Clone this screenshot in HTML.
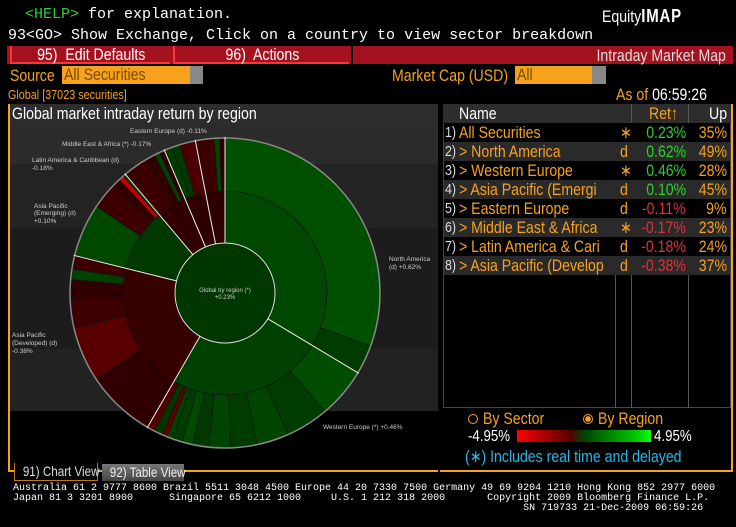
<!DOCTYPE html>
<html><head><meta charset="utf-8"><style>
*{margin:0;padding:0;box-sizing:border-box}
body{width:736px;height:527px;background:#000;position:relative;overflow:hidden;font-family:"Liberation Sans",sans-serif;color:#fff}
.a{position:absolute;white-space:nowrap}
.n{display:inline-block;transform:scaleX(.83);transform-origin:0 0}
.nr{display:inline-block;transform:scaleX(.83);transform-origin:100% 0}
.nc{display:inline-block;transform:scaleX(.83);transform-origin:50% 0}
.mono{font-family:"Liberation Mono",monospace}
.or{color:#f6a21d}
.row{position:absolute;left:444px;width:286px;height:19px;font-size:17px;line-height:19px}
.row span{position:absolute;top:0}
</style></head><body>
<div class="a mono" style="left:25px;top:6px;font-size:15px"><span style="color:#2bd12b">&lt;HELP&gt;</span> for explanation.</div>
<div class="a" style="left:602px;top:6px;font-size:17px"><span class="n">Equity<b style="font-size:18px;letter-spacing:1px">IMAP</b></span></div>
<div class="a mono" style="left:8px;top:27px;font-size:15px">93&lt;GO&gt; Show Exchange, Click on a country to view sector breakdown</div>
<div class="a" style="left:7px;top:46px;width:726px;height:18px;background:#a4121f"></div>
<div class="a" style="left:10px;top:46px;width:160px;height:18px;background:#a4121f;border-bottom:2px solid #f33;border-left:2px solid #f33;font-size:17px;line-height:17px;text-align:center"><span class="nc">95)&nbsp; Edit Defaults</span></div>
<div class="a" style="left:173px;top:46px;width:176px;height:18px;background:#a4121f;border-bottom:2px solid #f33;border-left:2px solid #f33;font-size:17px;line-height:17px;text-align:center"><span class="nc">96)&nbsp; Actions</span></div>
<div class="a" style="left:351px;top:46px;width:2px;height:18px;background:#000"></div>
<div class="a" style="right:10px;top:47px;font-size:17px;line-height:17px;color:#ddd"><span class="nr">Intraday Market Map</span></div>
<div class="a or" style="left:10px;top:66px;font-size:17px"><span class="n">Source</span></div>
<div class="a" style="left:62px;top:66px;width:128px;height:18px;background:#f6a21d;color:#7a4a00;font-size:17px;line-height:18px;padding-left:2px"><span class="n">All Securities</span></div>
<div class="a" style="left:190px;top:66px;width:13px;height:18px;background:#888"></div>
<div class="a or" style="left:392px;top:66px;font-size:17px"><span class="n">Market Cap (USD)</span></div>
<div class="a" style="left:515px;top:66px;width:77px;height:18px;background:#f6a21d;color:#7a4a00;font-size:17px;line-height:18px;padding-left:2px"><span class="n">All</span></div>
<div class="a" style="left:592px;top:66px;width:14px;height:18px;background:#888"></div>
<div class="a or" style="left:8px;top:87px;font-size:13px"><span class="n">Global [37023 securities]</span></div>
<div class="a" style="left:616px;top:85px;font-size:17px"><span class="n"><span class="or">As of</span> 06:59:26</span></div>

<div class="a" style="left:8px;top:104px;width:2px;height:368px;background:#f6a21d"></div>
<div class="a" style="left:8px;top:470px;width:430px;height:2px;background:#f6a21d"></div>
<div class="a" style="left:731px;top:104px;width:2px;height:368px;background:#f6a21d"></div>
<div class="a" style="left:440px;top:470px;width:293px;height:2px;background:#f6a21d"></div>
<div class="a" style="left:10px;top:104px;width:428px;height:20px;background:#2d2d2d;font-size:17px;line-height:20px;padding-left:2px"><span class="n">Global market intraday return by region</span></div>
<svg class="a" style="left:10px;top:124px" width="428" height="346" id="ch"></svg>

<div class="a" style="left:443px;top:104px;width:288px;height:304px;border:1px solid #444;border-top:none"></div>
<div class="a" style="left:443px;top:104px;width:288px;height:19px;background:#2d2d2d;font-size:17px;line-height:19px">
<span class="a n" style="left:16px">Name</span><span class="a or n" style="left:206px">Ret↑</span><span class="a n" style="left:266px">Up</span></div>
<div class="a" style="left:631px;top:104px;width:1px;height:304px;background:#555"></div>
<div class="a" style="left:688px;top:104px;width:1px;height:304px;background:#555"></div>
<div class="a" style="left:615px;top:123px;width:1px;height:285px;background:#555"></div>
<div id="rows"></div>

<div class="a or" style="left:468px;top:409px;font-size:17px"><span style="display:inline-block;width:10px;height:10px;border:1px solid #f6a21d;border-radius:50%"></span> <span class="n">By Sector</span></div>
<div class="a or" style="left:583px;top:409px;font-size:17px"><span style="display:inline-block;width:10px;height:10px;border:1px solid #f6a21d;border-radius:50%;background:radial-gradient(#f6a21d 45%,#000 55%)"></span> <span class="n">By Region</span></div>
<div class="a" style="left:468px;top:428px;font-size:16px"><span class="n">-4.95%</span></div>
<div class="a" style="left:517px;top:430px;width:134px;height:12px;background:linear-gradient(90deg,#f00,#500 40%,#040 50%,#0c0 90%,#1f1)"></div>
<div class="a" style="left:654px;top:428px;font-size:16px"><span class="n">4.95%</span></div>
<div class="a" style="left:465px;top:447px;font-size:17px;color:#20b8e8"><span class="n">(∗) Includes real time and delayed</span></div>

<div class="a" style="left:14px;top:463px;width:84px;height:18px;background:#000;border:1px solid #c07a10;border-top:none;font-size:14px;line-height:16px;text-align:center;color:#ddd"><span class="nc">91) Chart View</span></div>
<div class="a" style="left:102px;top:464px;width:82px;height:17px;background:linear-gradient(#777,#444);font-size:14px;line-height:16px;text-align:center;color:#eee"><span class="nc">92) Table View</span></div>
<div class="a mono" style="left:13px;top:484px;font-size:10px;line-height:10px;color:#fff;white-space:pre">Australia 61 2 9777 8600 Brazil 5511 3048 4500 Europe 44 20 7330 7500 Germany 49 69 9204 1210 Hong Kong 852 2977 6000
Japan 81 3 3201 8900      Singapore 65 6212 1000     U.S. 1 212 318 2000       Copyright 2009 Bloomberg Finance L.P.
                                                                                     SN 719733 21-Dec-2009 06:59:26</div>

<script>
var rows=[["1)","All Securities","∗","0.23%","35%",1],["2)","&gt; North America","d","0.62%","49%",1],["3)","&gt; Western Europe","∗","0.46%","28%",1],["4)","&gt; Asia Pacific (Emergi","d","0.10%","45%",1],["5)","&gt; Eastern Europe","d","-0.11%","9%",0],["6)","&gt; Middle East &amp; Africa","∗","-0.17%","23%",0],["7)","&gt; Latin America &amp; Cari","d","-0.18%","24%",0],["8)","&gt; Asia Pacific (Develop","d","-0.38%","37%",0]];
var h="";rows.forEach(function(r,i){var y=123+i*19;h+='<div class="row" style="top:'+y+'px;background:'+(i%2?'#2a2a2a':'#000')+'"><span class="n" style="left:1px;color:#ddd;font-size:15px">'+r[0]+'</span><span class="or n" style="left:15px">'+r[1]+'</span><span class="or n" style="left:176px">'+r[2]+'</span><span class="nr" style="right:44px;color:'+(r[5]?'#2bd12b':'#e0303a')+'">'+r[3]+'</span><span class="or nr" style="right:3px">'+r[4]+'</span></div>';});
document.getElementById('rows').innerHTML=h;
var s='',cx=215,cy=169;
s+='<rect x="0" y="0" width="428" height="40" fill="#2b2b2b"/><rect x="0" y="40" width="428" height="64" fill="#232323"/><rect x="0" y="104" width="428" height="121" fill="#1c1c1c"/><rect x="0" y="225" width="428" height="62" fill="#222"/>';
function P(a,r){a=(a-90)*Math.PI/180;return (cx+r*Math.cos(a)).toFixed(1)+','+(cy+r*Math.sin(a)).toFixed(1);}
function arc(r0,r1,a0,a1,f){var l=(a1-a0)>180?1:0;s+='<path d="M'+P(a0,r1)+'A'+r1+','+r1+' 0 '+l+' 1 '+P(a1,r1)+'L'+P(a1,r0)+'A'+r0+','+r0+' 0 '+l+' 0 '+P(a0,r0)+'Z" fill="'+f+'" stroke="#111" stroke-width="0.6"/>';}
var mid=[[0,121,'#004800'],[121,210,'#004000'],[210,284,'#360000'],[284,320,'#003800'],[320,337,'#300000'],[337,349,'#300000'],[349,360,'#300000']];
mid.forEach(function(m){arc(50,102,m[0],m[1],m[2]);});
var out=[[0,110,'#005000'],[110,121,'#003c00'],[121,140,'#004c00'],[140,156,'#003c00'],[156,168,'#004400'],[168,178,'#003c00'],[178,186,'#004400'],[186,192,'#003800'],[192,196,'#004a00'],[196,200,'#003c00'],[200,202,'#004400'],[202,204,'#600000'],[204,207,'#003800'],[207,210,'#500000'],[210,236,'#300000'],[236,257,'#580000'],[257,268,'#3c0000'],[268,275,'#300000'],[275,279,'#004000'],[279,284,'#3a0000'],[284,304,'#004800'],[304,314,'#3c0000'],[314,317,'#300000'],[317,319,'#c00000'],[319,320,'#004000'],[320,330,'#3a0000'],[330,333,'#300000'],[333,335,'#004000'],[335,337,'#300000'],[337,340,'#003c00'],[340,343,'#003800'],[343,349,'#4a0000'],[349,356,'#3a0000'],[356,358,'#004400'],[358,360,'#300000']];
out.forEach(function(m){arc(102,155,m[0],m[1],m[2]);});
s+='<circle cx="'+cx+'" cy="'+cy+'" r="155" fill="none" stroke="#888" stroke-width="1.5"/>';
s+='<circle cx="'+cx+'" cy="'+cy+'" r="50" fill="#003600" stroke="#ddd" stroke-width="1"/>';
[0,121,210,284,320,337,349].forEach(function(a){var p=P(a,50).split(','),q=P(a,156).split(',');s+='<line x1="'+p[0]+'" y1="'+p[1]+'" x2="'+q[0]+'" y2="'+q[1]+'" stroke="#eee" stroke-width="1"/>';});
function T(x,y,t){s+='<text x="'+x+'" y="'+y+'" fill="#ccc" font-size="6.5" font-family="Liberation Sans,sans-serif">'+t+'</text>';}
T(120,9,'Eastern Europe (d) -0.11%');T(52,22,'Middle East &amp; Africa (*) -0.17%');T(22,38,'Latin America &amp; Caribbean (d)');T(22,46,'-0.18%');T(24,84,'Asia Pacific');T(24,91,'(Emerging) (d)');T(24,99,'+0.10%');
T(2,213,'Asia Pacific');T(2,221,'(Developed) (d)');T(2,229,'-0.38%');T(379,137,'North America');T(379,145,'(d) +0.62%');T(313,305,'Western Europe (*) +0.46%');
s+='<text x="'+cx+'" y="168" fill="#ccc" font-size="6" text-anchor="middle" font-family="Liberation Sans,sans-serif">Global by region (*)</text><text x="'+cx+'" y="175" fill="#ccc" font-size="6" text-anchor="middle" font-family="Liberation Sans,sans-serif">+0.23%</text>';
document.getElementById('ch').innerHTML=s;
</script>
</body></html>
